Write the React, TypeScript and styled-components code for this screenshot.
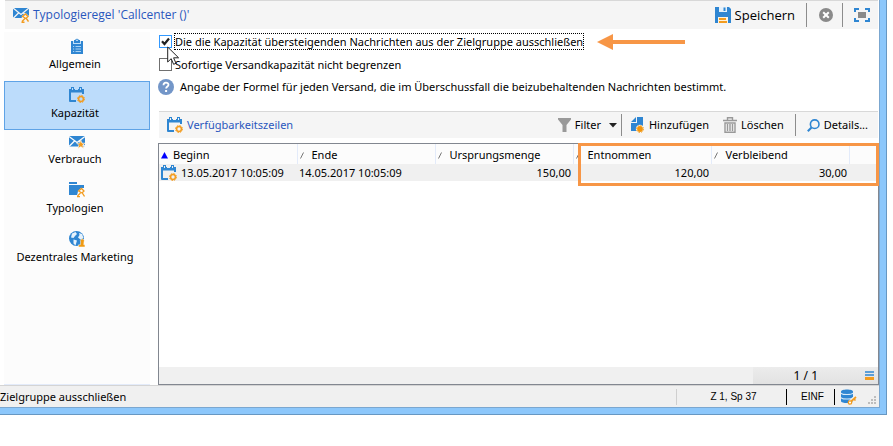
import React from "react";
import styled, { createGlobalStyle } from "styled-components";

const GlobalStyle = createGlobalStyle`
  * { box-sizing: border-box; }
  html, body { margin: 0; background: #fff; }
  body, button, input, table {
    font-family: "Noto Sans", "Open Sans", sans-serif;
    font-size: 11px;
    line-height: 16px;
    color: #000;
  }
`;

const Frame = styled.div`
  display: flex;
  flex-direction: column;
  min-height: calc(100vh - 31px);
  margin: 0 6px 31px 0;
  padding: 0 6px 6px 0;
  background: #8cc7fb;
  border: solid #6797c2;
  border-width: 0 1px 1px 0;
`;

const Client = styled.div`
  flex: 1;
  display: flex;
  flex-direction: column;
  background: #fff;
  border: solid #7ba7d0;
  border-width: 0 1px 1px 0;
`;

const TitleBar = styled.header`
  display: flex;
  align-items: center;
  height: 29px;
  margin: 0 1px 0 5px;
  padding: 0 8px;
  background: #f5f5f5;
  border-top: 1px solid #d8d8d8;
`;

const Heading = styled.h1`
  display: flex;
  align-items: center;
  gap: 4px;
  flex: 1;
  margin: 0;
  font-family: "Open Sans", "Noto Sans", sans-serif;
  font-size: 12px;
  font-weight: 400;
  white-space: nowrap;
  color: #2a57bd;
`;

const Divider = styled.span<{ $before: number; $after: number; $height?: number }>`
  width: 1px;
  height: ${(p) => p.$height ?? 24}px;
  margin: 0 ${(p) => p.$after}px 0 ${(p) => p.$before}px;
  background: #8c8c8c;
`;

const ToolButton = styled.button<{ $large?: boolean }>`
  display: flex;
  align-items: center;
  gap: 4px;
  padding: 0;
  border: 0;
  background: none;
  font-family: ${(p) => (p.$large ? `"Open Sans", "Noto Sans", sans-serif` : `"Noto Sans", "Open Sans", sans-serif`)};
  font-size: ${(p) => (p.$large ? 13 : 11)}px;
  white-space: nowrap;
`;

const Caret = styled.svg`
  margin-left: 4px;
`;

const Body = styled.div`
  flex: 1;
  display: flex;
  gap: 8px;
  padding: 0 0 0 4px;
`;

const Sidebar = styled.nav`
  width: 146px;
  margin-top: 3px;
  background: #fcfcfc;
  border-bottom: 1px solid #e3ebfa;
`;

const NavItem = styled.button<{ $active?: boolean }>`
  display: flex;
  flex-direction: column;
  align-items: center;
  gap: 2px;
  width: 100%;
  height: 49px;
  margin: 0 0 ${(p) => (p.$active ? -3 : 0)}px;
  padding: 5px 0 0;
  border: 1px solid ${(p) => (p.$active ? "#5fa3e6" : "transparent")};
  background: ${(p) => (p.$active ? "#bcdcfb" : "transparent")};
  white-space: nowrap;
`;

const NavLabel = styled.span`
  padding-right: 4px;
`;

const Main = styled.main`
  flex: 1;
  min-width: 0;
  display: flex;
  flex-direction: column;
`;

const Options = styled.div`
  display: flex;
  flex-direction: column;
  align-items: flex-start;
  padding: 4px 0 17px;
`;

const Option = styled.label<{ $focused?: boolean }>`
  position: relative;
  display: flex;
  align-items: center;
  gap: 2px;
  height: ${(p) => (p.$focused ? 17 : 29)}px;
  padding-left: 1px;
  white-space: nowrap;
`;

const CheckBox = styled.input`
  appearance: none;
  width: 13px;
  height: 13px;
  margin: 0;
  border: 1px solid #707070;
  background: #fff;
  &:checked {
    border-color: #3399ff;
    background: #fff
      url("data:image/svg+xml,%3Csvg xmlns='http://www.w3.org/2000/svg' viewBox='0 0 11 11'%3E%3Cpath d='M2 5.2 4.5 8 9 2.5' fill='none' stroke='%23222' stroke-width='2.2'/%3E%3C/svg%3E");
  }
`;

const OptionText = styled.span<{ $focused?: boolean }>`
  height: 17px;
  line-height: 15px;
  border: 1px dotted ${(p) => (p.$focused ? "#000" : "transparent")};
`;

const Pointer = styled.svg`
  position: absolute;
  left: 9px;
  top: 13px;
  z-index: 2;
`;

const OptionRow = styled.div`
  display: flex;
  align-items: center;
  gap: 13px;
`;

const Hint = styled.p`
  display: flex;
  align-items: center;
  gap: 6px;
  margin: 0;
  padding: 0;
  height: 15px;
  white-space: nowrap;
`;

const ListBar = styled.div`
  display: flex;
  align-items: center;
  height: 27px;
  margin: 0 1px;
  padding: 0 10px 0 8px;
  background: #f5f5f5;
  border-top: 1px solid #d8d8d8;
`;

const ListTitle = styled.h2`
  display: flex;
  align-items: center;
  gap: 4px;
  flex: 1;
  margin: 0;
  font-size: 11px;
  font-weight: 400;
  color: #2a57bd;
`;

const Group = styled.div`
  display: flex;
  gap: 14px;
`;

const ListBox = styled.section`
  position: relative;
  flex: 1;
  display: flex;
  flex-direction: column;
  margin-top: 5px;
  border: 1px solid #828790;
`;

const Grid = styled.table`
  width: 100%;
  table-layout: fixed;
  border-collapse: collapse;
  white-space: nowrap;
`;

const Col = styled.col`
  width: 138px;
`;

const HeadCell = styled.th`
  height: 20px;
  padding: 2px 0 0 2px;
  border-right: 1px solid #e3ebfa;
  background: #fcfcfc;
  font-weight: 400;
  text-align: left;
  &:last-child { border-right: 0; }
`;

const HeadLabel = styled.span`
  display: flex;
  align-items: center;
  gap: 4px;
`;

const Cell = styled.td<{ $numeric?: boolean }>`
  height: 17px;
  padding: 0 2px;
  background: #f0f0f0;
  text-align: ${(p) => (p.$numeric ? "right" : "left")};
`;

const CellLabel = styled.span`
  display: flex;
  align-items: center;
  gap: 4px;
  height: 17px;
`;

const Highlight = styled.div`
  position: absolute;
  top: -1px;
  left: 419px;
  right: -1px;
  height: 43px;
  border: 3px solid #f79646;
`;

const ListFooter = styled.footer`
  display: flex;
  justify-content: flex-end;
  height: 17px;
  margin-top: auto;
  background: #f0f0f0;
`;

const Counter = styled.div`
  display: flex;
  align-items: center;
  justify-content: flex-end;
  gap: 47px;
  width: 125px;
  padding-right: 4px;
  font-size: 12px;
  background: linear-gradient(#ececec, #e2e2e2);
`;

const StatusBar = styled.footer`
  display: flex;
  align-items: center;
  height: 22px;
  background: #f0f0f0;
  border-top: 1px solid #d4d4d4;
  white-space: nowrap;
`;

const StatusText = styled.span`
  flex: 1;
`;

const StatusCell = styled.span<{ $width: number; $dark?: boolean }>`
  display: flex;
  align-items: center;
  justify-content: center;
  width: ${(p) => p.$width}px;
  height: 16px;
  padding-left: 4px;
  border-left: 1px solid ${(p) => (p.$dark ? "#000" : "#cfcfcf")};
  font-family: "Liberation Sans", Arial, sans-serif;
  font-size: 10px;
`;

const Grip = styled.svg`
  align-self: flex-end;
  margin: 0 2px 2px 10px;
`;

const BLUE = "#2f86d2";
const ORANGE = "#f39c1f";

const icon = { width: 16, height: 16, viewBox: "0 0 16 16", "aria-hidden": true };

const RuleIcon = () => (
  <svg {...icon}>
    <path d="M0 1h16v10H0z" fill={BLUE} />
    <path d="M0 1 8 7.500 16 1M0 11.500l5.500-5.500M16 11l-5.500-5" fill="none" stroke="#f5f5f5" strokeWidth="1.300" />
    <path d="m9 9 3.500-3 3.500 3v7H8z" fill="#f5f5f5" />
    <path d="m9.500 9.500 3-2.500 2.500 2.500-2 2zM9 14.500l3-3M13 11l2.500 3.500M8.500 15.200h3" fill="none" stroke={ORANGE} strokeWidth="1.400" />
  </svg>
);

const UsageIcon = () => (
  <svg {...icon}>
    <path d="M0 3h16v10.500H0z" fill={BLUE} />
    <path d="M0 3.500 8 9.500l8-6M0 13.500l5.500-5.500M16 13.500l-5.500-5.500" fill="none" stroke="#fcfcfc" strokeWidth="1.300" />
    <path d="m11.800 7 1.200 3.200h3l-2.300 1.900.9 3.400-2.800-1.900L9 15.500l.9-3.400-2.300-1.900h3z" fill={ORANGE} stroke="#fcfcfc" strokeWidth=".6" />
  </svg>
);

const ClipboardIcon = () => (
  <svg {...icon}>
    <path d="M2 3h12v13H2z" fill={BLUE} />
    <path d="M4 3h8v3H4z" fill="#bfe0fa" />
    <path d="M5 5V2h1.200a1.900 1.900 0 0 1 3.600 0H11v3z" fill={BLUE} />
    <circle cx="8" cy="2.300" r=".8" fill="#fff" />
    <path d="M4 8.500h1.200M4 11h1.200M4 13.500h1.200M6.500 8.500H12M6.500 11H12M6.500 13.500H12" stroke="#a8d2f5" />
  </svg>
);

const CalendarIcon = ({ back = "#fff" }: { back?: string }) => (
  <svg {...icon}>
    <path d="M0 2h15v5h-2V5.500H2V13h5v2H1a1 1 0 0 1-1-1z" fill={BLUE} />
    <path d="M2 0h3v3H2zM10 0h3v3h-3z" fill={BLUE} />
    <path d="M3 1h1v2H3zM11 1h1v2h-1zM6 2h3v1H6z" fill={back} />
    <circle cx="12" cy="12" r="3.500" fill="none" stroke={ORANGE} strokeWidth="1" strokeDasharray="1.500 1.250" />
    <circle cx="12" cy="12" r="2.400" fill="none" stroke={ORANGE} strokeWidth="1.500" />
  </svg>
);

const FolderIcon = () => (
  <svg {...icon}>
    <path d="M0 0h8v2H0zM0 3h15v10H0z" fill={BLUE} />
    <path d="m8 13 1-4 3.500-4H16v10H7z" fill="#fcfcfc" />
    <path d="M0 3h15v3h-3L8.500 9 8 13H0z" fill={BLUE} />
    <path d="m9.500 9 3-2.500L15 9l-2 2zM8.500 14l3-3M13 10.500l2.500 4M8 14.700h3" fill="none" stroke={ORANGE} strokeWidth="1.300" />
  </svg>
);

const GlobeIcon = () => (
  <svg {...icon}>
    <circle cx="7.500" cy="7.500" r="7.500" fill={BLUE} />
    <path d="M3 2.500 6.500 1 8 3 6 5 4.500 7 2 6.500zM10 2l3 1 1.500 4-3 1.500L9 6.500 10.500 4zM4.500 8.500l3.500 1-1.500 5-2-2z" fill="#e6f2fc" />
    <path d="M9.500 16v-2.200h1.800L11.600 11A2 2 0 1 1 15 11l-.2 2.800H16V16z" fill="#f09a12" stroke="#fcfcfc" strokeWidth=".5" />
  </svg>
);

const SaveIcon = () => (
  <svg {...icon}>
    <path d="M0 0h14l2 2v14H0z" fill={BLUE} />
    <path d="M4 0h8v5H4z" fill="#e4f1fc" />
    <path d="M8.500 0.500h2v3.500h-2z" fill={BLUE} />
    <path d="M3 10h10v6H3z" fill="#fff3df" />
    <path d="M4 12h7M4 15h8" stroke={ORANGE} strokeWidth="2" />
  </svg>
);

const CancelIcon = () => (
  <svg {...icon}>
    <circle cx="8" cy="8" r="7" fill="#8a8a8a" />
    <path d="m5.200 5.200 5.600 5.600M10.800 5.200l-5.600 5.600" stroke="#fff" strokeWidth="2" />
  </svg>
);

const FitIcon = () => (
  <svg {...icon}>
    <path d="M1 5V2h4M11 2h4v3M15 11v3h-4M5 14H1v-3" fill="none" stroke={BLUE} strokeWidth="2" />
    <path d="M4 5h8v6H4z" fill="#8a8a8a" />
  </svg>
);

const HelpIcon = () => (
  <svg {...icon}>
    <circle cx="8" cy="8" r="8" fill="#7396c8" />
    <path d="M5.500 6.200c0-3.300 5-3.200 5-.4 0 1.700-2.400 1.700-2.400 3.800" fill="none" stroke="#fff" strokeWidth="1.800" />
    <path d="M7.100 11h2v2h-2z" fill="#fff" />
  </svg>
);

const FunnelIcon = () => (
  <svg width="13" height="14" viewBox="0 0 13 14" aria-hidden>
    <path d="M0 0h13v1.500L8.500 7v7h-4V7L0 1.500z" fill="#999" />
  </svg>
);

const AddIcon = () => (
  <svg width="14" height="16" viewBox="0 0 14 16" aria-hidden>
    <path d="M0 5 5 0v5zM6 0h6v14H0V6h6z" fill={BLUE} />
    <circle cx="9" cy="12" r="4.200" fill="#f5f5f5" />
    <circle cx="9" cy="12" r="3.500" fill="none" stroke={ORANGE} strokeDasharray="1.500 1.250" />
    <circle cx="9" cy="12" r="2.900" fill="#f3960c" />
  </svg>
);

const TrashIcon = () => (
  <svg width="14" height="16" viewBox="0 0 14 16" aria-hidden>
    <path d="M4.500 3V.7h5V3M0 3.500h14M2 6h10v9.300H2zM4.500 7v7M7 7v7M9.500 7v7" fill="none" stroke="#999" strokeWidth="1.400" />
  </svg>
);

const SearchIcon = () => (
  <svg width="13" height="13" viewBox="0 0 13 13" aria-hidden>
    <circle cx="7.700" cy="5.200" r="4.300" fill="none" stroke={BLUE} strokeWidth="1.600" />
    <path d="M4.500 8.500.8 12.300" stroke={BLUE} strokeWidth="2" />
  </svg>
);

const SortedIcon = () => (
  <svg width="8" height="7" viewBox="0 0 8 7" aria-hidden>
    <path d="M3.500 0 7 6.500H0z" fill="#00f" />
  </svg>
);

const SlashIcon = () => (
  <svg width="8" height="7" viewBox="0 0 8 7" aria-hidden>
    <path d="M.5 6.500 3.500.5" stroke="#777" />
  </svg>
);

const LinesIcon = () => (
  <svg width="9" height="9" viewBox="0 0 9 9" aria-hidden>
    <path d="M0 1h9M0 4h9" stroke={BLUE} strokeWidth="1.500" />
    <path d="M0 6h9v3H0z" fill={ORANGE} />
  </svg>
);

const DatabaseIcon = () => (
  <svg {...icon}>
    <path d="M0 2.500C0-.3 12-.3 12 2.500v9.500c0 2.800-12 2.800-12 0z" fill={BLUE} />
    <path d="M0 4c1 2 11 2 12 0M0 8.500c1 2 11 2 12 0" fill="none" stroke="#d6e9f9" strokeWidth="1.200" />
    <path d="m8.500 13 6.500-5.500M13 9.500l1.500 1.500" stroke="#f0f0f0" strokeWidth="3" />
    <path d="M9.500 13 15 8M13 10l1.500 1.500" stroke={ORANGE} strokeWidth="1.700" />
    <circle cx="9" cy="13.500" r="1.700" fill="#fff" stroke={ORANGE} strokeWidth="1.300" />
  </svg>
);

const ArrowMark = () => (
  <svg width="88" height="16" viewBox="0 0 88 16" aria-hidden>
    <path d="M0 8 16 0v6h72v4H16v6z" fill="#f79646" />
  </svg>
);

const navItems = [
  { label: "Allgemein", glyph: <ClipboardIcon /> },
  { label: "Kapazität", glyph: <CalendarIcon back="#bcdcfb" />, active: true },
  { label: "Verbrauch", glyph: <UsageIcon /> },
  { label: "Typologien", glyph: <FolderIcon /> },
  { label: "Dezentrales Marketing", glyph: <GlobeIcon /> },
];

const columns = ["Beginn", "Ende", "Ursprungsmenge", "Entnommen", "Verbleibend"];

export default function App() {
  return (
    <>
      <GlobalStyle />
      <Frame>
        <Client>
          <TitleBar>
            <Heading>
              <RuleIcon />
              Typologieregel 'Callcenter ()'
            </Heading>
            <ToolButton $large>
              <SaveIcon />
              Speichern
            </ToolButton>
            <Divider $before={11} $after={11} />
            <ToolButton aria-label="Abbrechen">
              <CancelIcon />
            </ToolButton>
            <Divider $before={8} $after={11} />
            <ToolButton aria-label="Vollbild">
              <FitIcon />
            </ToolButton>
          </TitleBar>
          <Body>
            <Sidebar>
              {navItems.map((n) => (
                <NavItem key={n.label} $active={n.active}>
                  {n.glyph}
                  <NavLabel>{n.label}</NavLabel>
                </NavItem>
              ))}
            </Sidebar>
            <Main>
              <Options>
                <OptionRow>
                  <Option $focused>
                    <CheckBox type="checkbox" defaultChecked />
                    <OptionText $focused>
                      Die die Kapazität übersteigenden Nachrichten aus der Zielgruppe ausschließen
                    </OptionText>
                    <Pointer width="13" height="20" viewBox="0 0 13 20" aria-hidden>
                      <path d="M.7 1v15l3.500-3.300 2.400 5.600 2.400-1-2.400-5.500h5z" fill="#fff" stroke="#222" />
                    </Pointer>
                  </Option>
                  <ArrowMark />
                </OptionRow>
                <Option>
                  <CheckBox type="checkbox" />
                  <OptionText>Sofortige Versandkapazität nicht begrenzen</OptionText>
                </Option>
                <Hint>
                  <HelpIcon />
                  Angabe der Formel für jeden Versand, die im Überschussfall die beizubehaltenden Nachrichten bestimmt.
                </Hint>
              </Options>
              <ListBar>
                <ListTitle>
                  <CalendarIcon back="#f5f5f5" />
                  Verfügbarkeitszeilen
                </ListTitle>
                <ToolButton>
                  <FunnelIcon />
                  Filter
                  <Caret width="8" height="5" viewBox="0 0 8 5" aria-hidden>
                    <path d="M0 0h8L4 4.500z" fill="#222" />
                  </Caret>
                </ToolButton>
                <Divider $before={4} $after={9} $height={22} />
                <Group>
                  <ToolButton>
                    <AddIcon />
                    Hinzufügen
                  </ToolButton>
                  <ToolButton>
                    <TrashIcon />
                    Löschen
                  </ToolButton>
                </Group>
                <Divider $before={11} $after={11} $height={22} />
                <ToolButton>
                  <SearchIcon />
                  Details...
                </ToolButton>
              </ListBar>
              <ListBox>
                <Grid>
                  <colgroup>
                    {columns.map((c) => (
                      <Col key={c} />
                    ))}
                    <col />
                  </colgroup>
                  <thead>
                    <tr>
                      {columns.map((c, i) => (
                        <HeadCell key={c}>
                          <HeadLabel>
                            {i === 0 ? <SortedIcon /> : <SlashIcon />}
                            {c}
                          </HeadLabel>
                        </HeadCell>
                      ))}
                      <HeadCell />
                    </tr>
                  </thead>
                  <tbody>
                    <tr>
                      <Cell>
                        <CellLabel>
                          <CalendarIcon back="#f0f0f0" />
                          13.05.2017 10:05:09
                        </CellLabel>
                      </Cell>
                      <Cell>14.05.2017 10:05:09</Cell>
                      <Cell $numeric>150,00</Cell>
                      <Cell $numeric>120,00</Cell>
                      <Cell $numeric>30,00</Cell>
                      <Cell />
                    </tr>
                  </tbody>
                </Grid>
                <ListFooter>
                  <Counter>
                    1 / 1
                    <LinesIcon />
                  </Counter>
                </ListFooter>
                <Highlight />
              </ListBox>
            </Main>
          </Body>
          <StatusBar>
            <StatusText>Zielgruppe ausschließen</StatusText>
            <StatusCell $width={110}>Z 1, Sp 37</StatusCell>
            <StatusCell $width={48} $dark>EINF</StatusCell>
            <StatusCell $width={24} $dark>
              <DatabaseIcon />
            </StatusCell>
            <Grip width="9" height="9" viewBox="0 0 9 9" aria-hidden>
              <path d="M6 0h2v2H6zM3 3h2v2H3zM6 3h2v2H6zM0 6h2v2H0zM3 6h2v2H3zM6 6h2v2H6z" fill="#bdbdbd" />
            </Grip>
          </StatusBar>
        </Client>
      </Frame>
    </>
  );
}
